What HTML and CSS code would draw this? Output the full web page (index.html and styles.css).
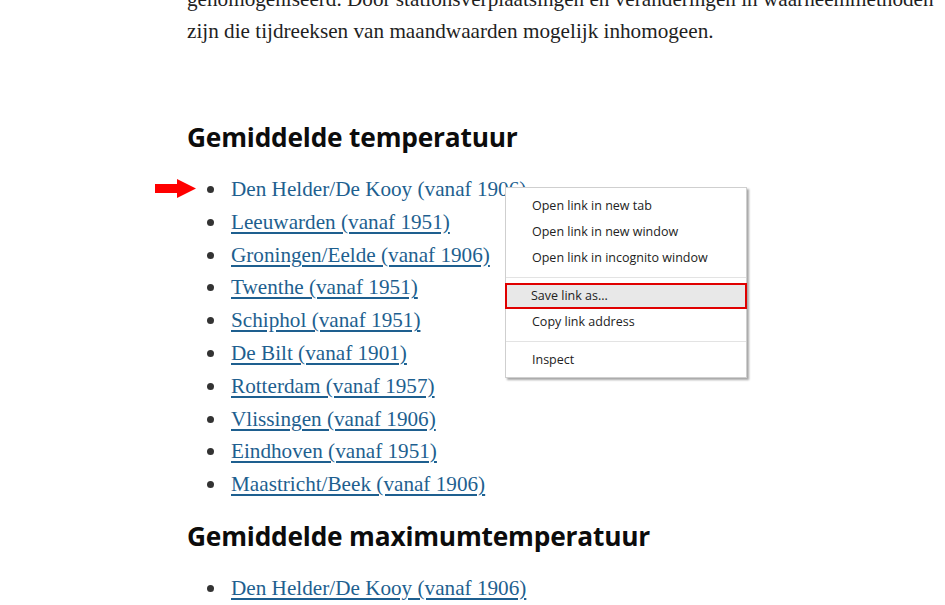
FILE: index.html
```html
<!DOCTYPE html>
<html lang="nl">
<head>
<meta charset="utf-8">
<link rel="stylesheet" href="styles.css">
</head>
<body>
<main class="content">
  <p class="intro">gehomogeniseerd. Door stationsverplaatsingen en veranderingen in waarneemmethoden<br>zijn die tijdreeksen van maandwaarden mogelijk inhomogeen.</p>

  <h2 class="heading first">Gemiddelde temperatuur</h2>
  <ul class="links">
    <li class="hovered">
      <svg class="arrow" width="42" height="20" viewBox="0 0 42 20"><polygon points="0,5 22,5 22,0 41,9.5 22,19 22,14 0,14" fill="#ff0000"/></svg>
      <a href="#" class="hover">Den Helder/De Kooy (vanaf 1906)</a>
      <div class="menu">
        <div class="item">Open link in new tab</div>
        <div class="item">Open link in new window</div>
        <div class="item">Open link in incognito window</div>
        <div class="sep"></div>
        <div class="item selected">Save link as...</div>
        <div class="item">Copy link address</div>
        <div class="sep"></div>
        <div class="item">Inspect</div>
      </div>
    </li>
    <li><a href="#">Leeuwarden (vanaf 1951)</a></li>
    <li><a href="#">Groningen/Eelde (vanaf 1906)</a></li>
    <li><a href="#">Twenthe (vanaf 1951)</a></li>
    <li><a href="#">Schiphol (vanaf 1951)</a></li>
    <li><a href="#">De Bilt (vanaf 1901)</a></li>
    <li><a href="#">Rotterdam (vanaf 1957)</a></li>
    <li><a href="#">Vlissingen (vanaf 1906)</a></li>
    <li><a href="#">Eindhoven (vanaf 1951)</a></li>
    <li><a href="#">Maastricht/Beek (vanaf 1906)</a></li>
  </ul>

  <h2 class="heading second">Gemiddelde maximumtemperatuur</h2>
  <ul class="links">
    <li><a href="#">Den Helder/De Kooy (vanaf 1906)</a></li>
  </ul>
</main>
</body>
</html>
```
FILE: styles.css
```css
html, body {
  margin: 0;
  padding: 0;
  background: #ffffff;
  overflow: hidden;
}
body {
  width: 945px;
  height: 605px;
}
.content {
  margin-left: 187px;
  width: 560px;
  margin-top: -17px;
  font-family: "Liberation Serif", "DejaVu Serif", serif;
  color: #1a1a1a;
}
.intro {
  margin: 0;
  font-size: 21.2px;
  line-height: 32px;
  color: #1f1f1f;
  white-space: nowrap;
}
.heading {
  font-family: "Open Sans", "Noto Sans", sans-serif;
  font-weight: 700;
  font-size: 26.3px;
  line-height: 32px;
  color: #0c0c0c;
  margin: 0;
  letter-spacing: -0.2px;
}
.heading.first {
  margin-top: 74px;
}
.heading.second {
  margin-top: 19px;
}
.links {
  list-style: none;
  margin: 20px 0 14px 0;
  padding: 0 0 0 44px;
}
.links li {
  position: relative;
  font-size: 21.2px;
  line-height: 32.8px;
}
.links li::before {
  content: "";
  position: absolute;
  left: -24px;
  top: 13px;
  width: 7px;
  height: 7px;
  border-radius: 50%;
  background: #333333;
}
.links a {
  color: #1e5f8f;
  text-decoration: underline;
  text-decoration-thickness: 1.5px;
  text-underline-offset: 3px;
}
.links a.hover {
  text-decoration: none;
}
.arrow {
  position: absolute;
  left: -76px;
  top: 6px;
}
.menu {
  position: absolute;
  left: 274px;
  top: 14px;
  width: 240px;
  padding: 5px 0 4px 0;
  background: #ffffff;
  border: 1px solid #cfcfcf;
  box-shadow: 2px 2px 2px rgba(0,0,0,0.35);
  font-family: "Open Sans", "Noto Sans", sans-serif;
  font-size: 12.5px;
  color: #222;
  z-index: 5;
}
.menu .item {
  height: 26px;
  line-height: 26px;
  padding-left: 26px;
  box-sizing: border-box;
}
.menu .item.selected {
  background: #e8e8e8;
  border: 2px solid #e00000;
  padding-left: 24px;
  line-height: 22px;
  margin: 0 -1px;
}
.menu .sep {
  height: 1px;
  background: #e3e3e3;
  margin: 6px 0 5px 0;
}
```
